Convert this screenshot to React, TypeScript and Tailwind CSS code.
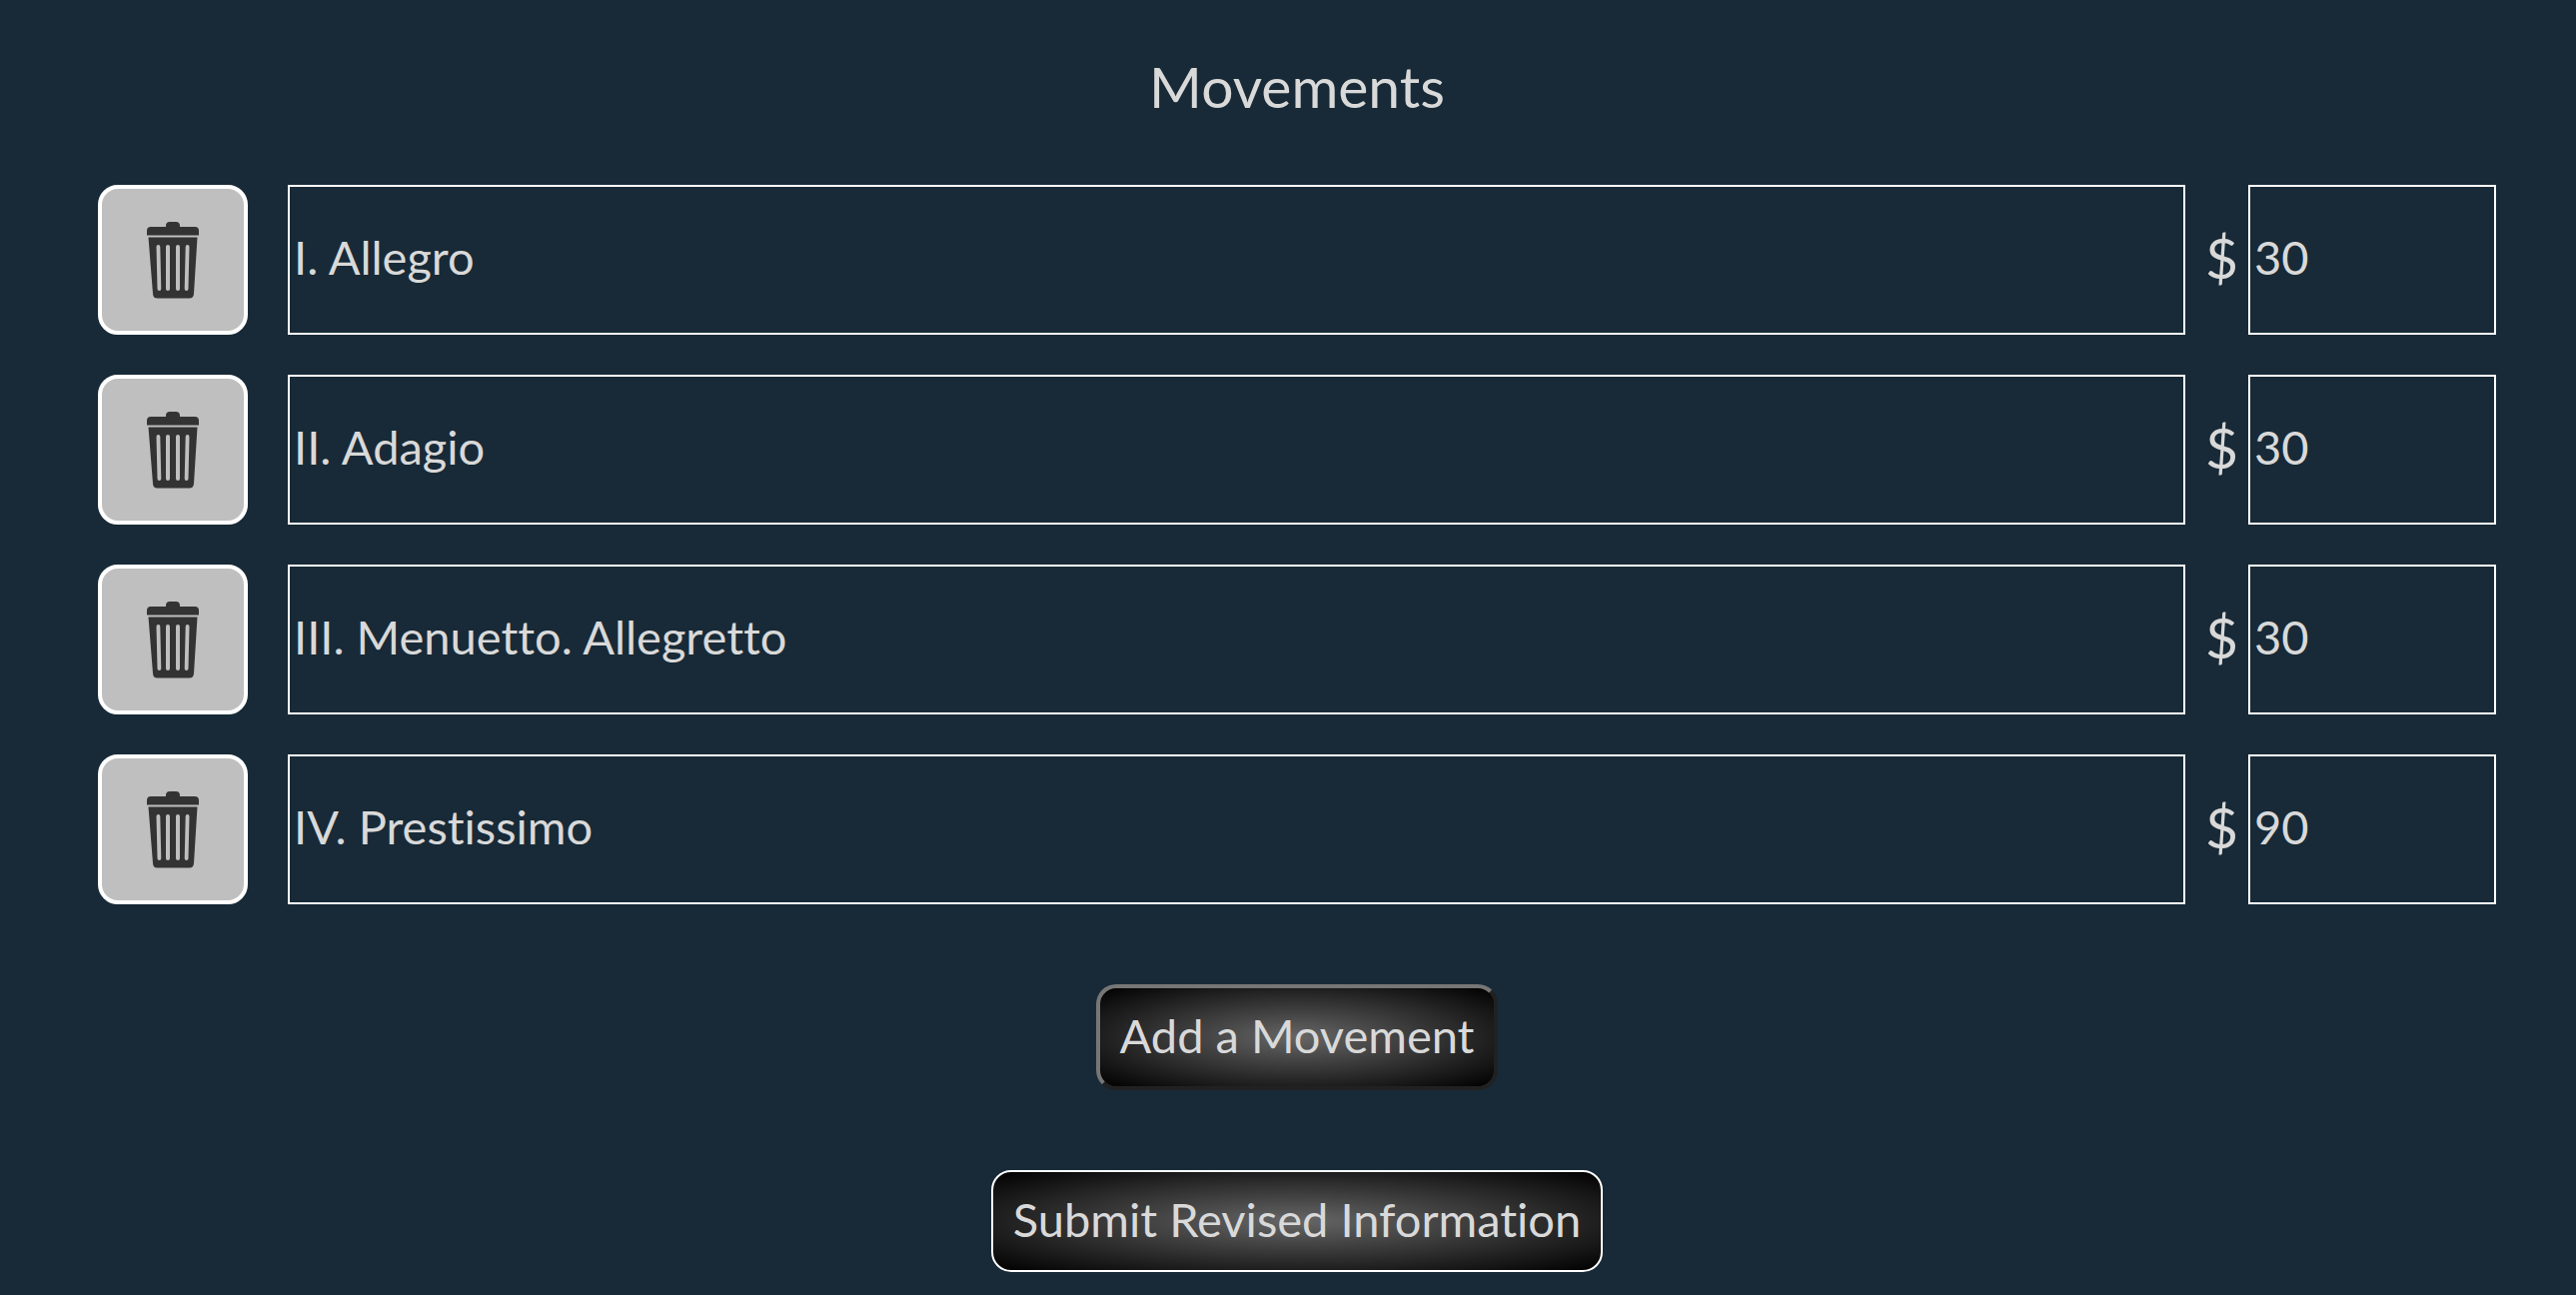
import { useState } from "react";

type Movement = { id: number; name: string; price: string };

const initial: Movement[] = [
  { id: 1, name: "I. Allegro", price: "30" },
  { id: 2, name: "II. Adagio", price: "30" },
  { id: 3, name: "III. Menuetto. Allegretto", price: "30" },
  { id: 4, name: "IV. Prestissimo", price: "90" },
];

function TrashIcon() {
  return (
    <svg viewBox="0 0 52 77" className="h-[77px] w-[52px]" aria-hidden="true">
      <g fill="#333333">
        <path d="M0 13V9q0-4 4-4h15V4q0-4 4-4h6q4 0 4 4v1h15q4 0 4 4v4.500H0z" />
        <path
          fillRule="evenodd"
          d="M1.500 15.500h49L47 72q-.4 4.500-4.500 4.500h-32Q6.200 76.500 6 72zM9.500 25l1 42a1.900 1.900 0 0 0 3.800 0l-1-42a1.900 1.900 0 0 0-3.800 0zM19 25v42a2 2 0 0 0 4 0V25a2 2 0 0 0-4 0zM29 25v42a2 2 0 0 0 4 0V25a2 2 0 0 0-4 0zM38.700 25l-1 42a1.900 1.900 0 0 0 3.800 0l1-42a1.900 1.900 0 0 0-3.800 0z"
        />
      </g>
    </svg>
  );
}

export default function App() {
  const [movements, setMovements] = useState(initial);

  const update = (id: number, change: Partial<Movement>) =>
    setMovements(movements.map((m) => (m.id === id ? { ...m, ...change } : m)));

  return (
    <main className="min-h-screen bg-[#182a37] pt-[50px] pr-20 pb-[23px] pl-[98px] font-['Optima','Lato',sans-serif] text-[47px] text-[#d9d9d9] [font-variant-ligatures:none]">
      <form className="flex flex-col items-center" onSubmit={(e) => e.preventDefault()}>
        <h1 className="mb-[63px] text-[57px] leading-[72px]">Movements</h1>

        <ul className="flex w-full flex-col gap-10">
          {movements.map((m) => (
            <li key={m.id} className="flex items-center">
              <button
                type="button"
                aria-label={`Delete ${m.name}`}
                onClick={() => setMovements(movements.filter((x) => x.id !== m.id))}
                className="mr-10 flex size-[150px] shrink-0 items-center justify-center rounded-[20px] border-4 border-white bg-[#bfbfbf]"
              >
                <TrashIcon />
              </button>
              <input
                type="text"
                aria-label="Movement name"
                value={m.name}
                onChange={(e) => update(m.id, { name: e.target.value })}
                className="h-[150px] min-w-0 flex-1 border-2 border-white bg-transparent px-1 pb-1.5"
              />
              <label htmlFor={`price-${m.id}`} className="w-[63px] shrink-0 pb-1 pl-5 text-[57px]">
                $
              </label>
              <input
                id={`price-${m.id}`}
                type="text"
                inputMode="numeric"
                value={m.price}
                onChange={(e) => update(m.id, { price: e.target.value })}
                className="h-[150px] w-[248px] shrink-0 border-2 border-white bg-transparent px-1 pb-1.5"
              />
            </li>
          ))}
        </ul>

        <button
          type="button"
          onClick={() => setMovements([...movements, { id: Date.now(), name: "", price: "" }])}
          className="mt-20 rounded-[20px] border-4 border-t-[#767676] border-r-[#212121] border-b-[#212121] border-l-[#767676] bg-[radial-gradient(#666666,#000000)] px-5 pt-[18px] pb-[22px] leading-[58px]"
        >
          Add a Movement
        </button>
        <button
          type="submit"
          className="mt-20 rounded-[20px] border-2 border-white bg-[radial-gradient(#666666,#000000)] px-5 pt-[18px] pb-[22px] leading-[58px]"
        >
          Submit Revised Information
        </button>
      </form>
    </main>
  );
}
